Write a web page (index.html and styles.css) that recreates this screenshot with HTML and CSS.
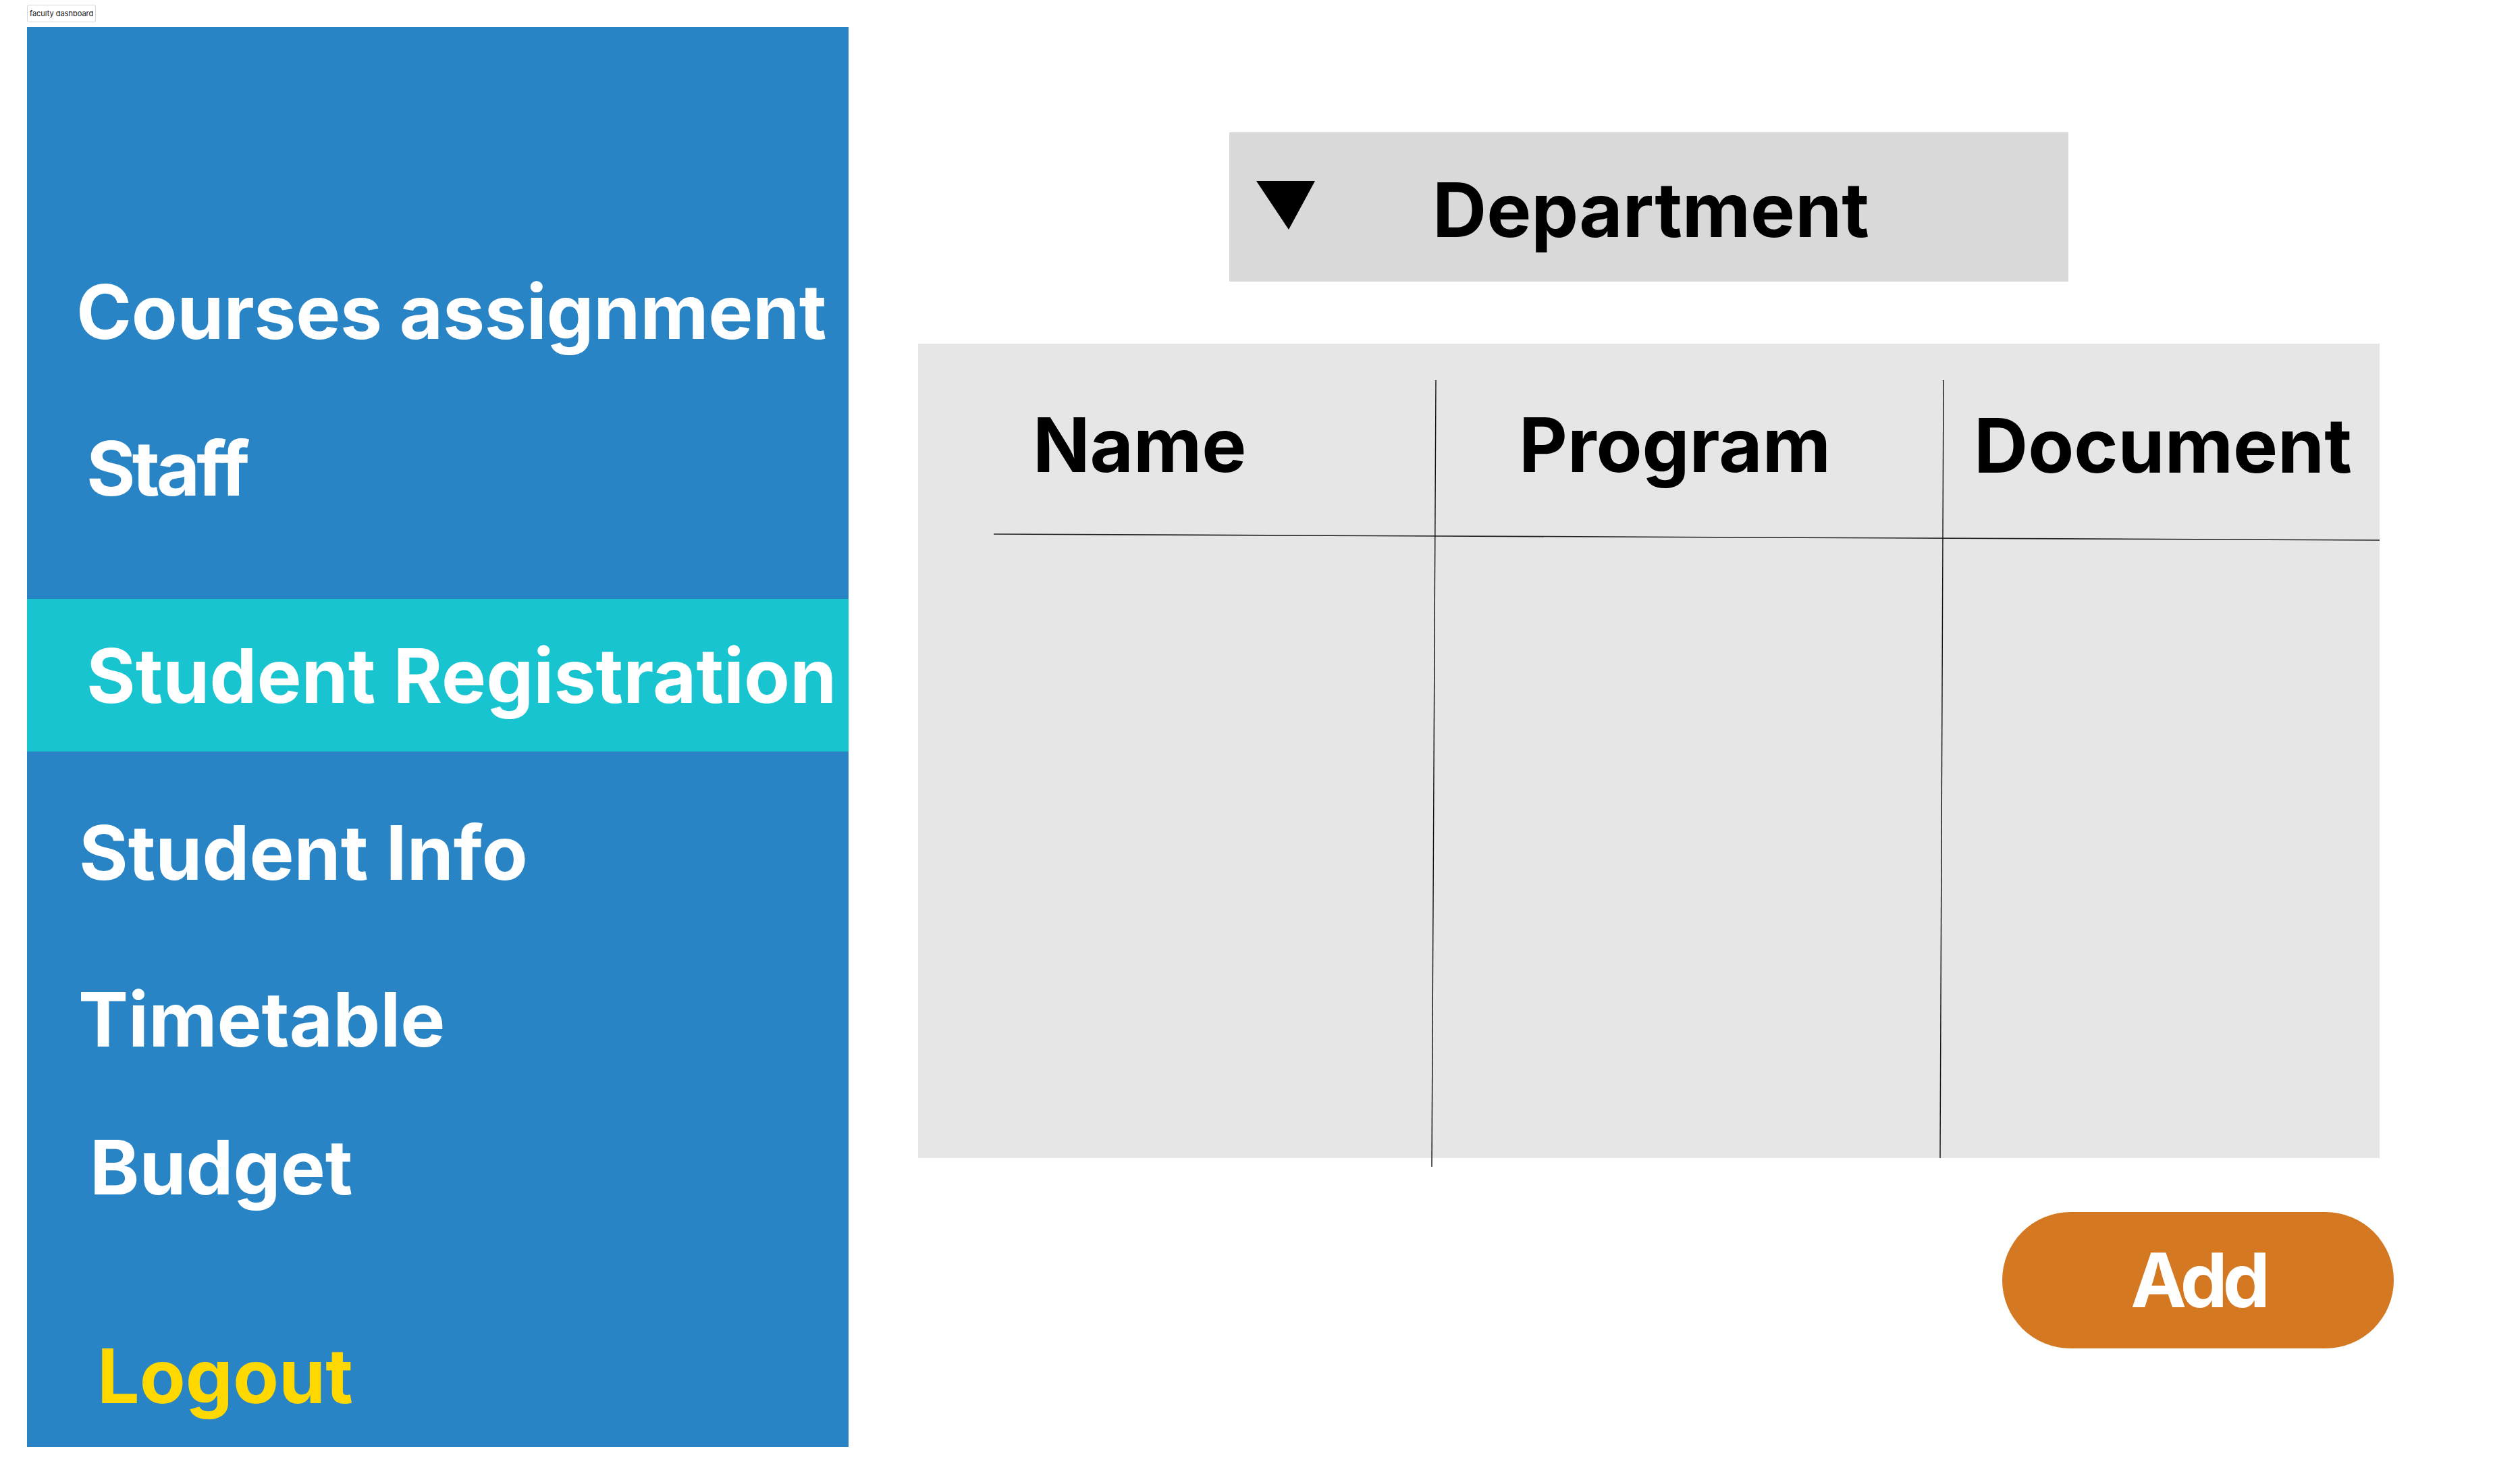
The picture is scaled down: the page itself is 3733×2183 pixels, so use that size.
FILE: index.html
```html
<!DOCTYPE html>
<html lang="en">
<head>
<meta charset="utf-8">
<title>faculty dashboard</title>
<link rel="stylesheet" href="styles.css">
</head>
<body>
<div class="page">
  <div class="frame-label">faculty dashboard</div>
  <div class="frame">
    <nav class="sidebar">
      <div class="nav-item nav-courses">Courses assignment</div>
      <div class="nav-item nav-staff">Staff</div>
      <div class="nav-active"><div class="nav-item nav-reg">Student Registration</div></div>
      <div class="nav-item nav-info">Student Info</div>
      <div class="nav-item nav-time">Timetable</div>
      <div class="nav-item nav-budget">Budget</div>
      <div class="nav-item nav-logout">Logout</div>
    </nav>
    <main class="content">
      <div class="dropdown">
        <svg class="dd-arrow" width="87" height="72" viewBox="0 0 87 72"><polygon points="0,0 87,0 48,72" fill="#000"/></svg>
        <span class="dd-text">Department</span>
      </div>
      <div class="table">
        <div class="th th-name">Name</div>
        <div class="th th-program">Program</div>
        <div class="th th-doc">Document</div>
        <svg class="table-lines" width="2165" height="1220" viewBox="0 0 2165 1220">
          <line x1="112" y1="282" x2="2165" y2="291" stroke="#222" stroke-width="1.6"/>
          <line x1="767" y1="54" x2="761" y2="1219" stroke="#111" stroke-width="1.4"/>
          <line x1="1519" y1="54" x2="1514" y2="1206" stroke="#111" stroke-width="1.4"/>
        </svg>
      </div>
      <div class="actions">
        <button class="add-btn">Add</button>
      </div>
    </main>
  </div>
</div>
</body>
</html>
```

FILE: styles.css
```css
* { box-sizing: border-box; }
html, body { margin: 0; padding: 0; background: #ffffff; }
body { font-family: Inter, "Noto Sans", sans-serif; }

.page { padding: 7px 0 0 40px; }

.frame-label {
  display: inline-block;
  height: 26px;
  padding: 0 3px;
  font-size: 11px;
  line-height: 24px;
  color: #111;
  border: 1px solid #d6d6d6;
  border-radius: 3px;
  background: #fff;
  margin-bottom: 7px;
  vertical-align: top;
}

.frame { display: flex; align-items: flex-start; }

.sidebar {
  width: 1217px;
  height: 2103px;
  background: #2884c5;
  display: flex;
  flex-direction: column;
  flex-shrink: 0;
}

.nav-item {
  font-size: 111px;
  font-weight: 700;
  line-height: 110px;
  height: 110px;
  color: #ffffff;
  white-space: nowrap;
}

.nav-courses { margin-top: 367px; padding-left: 73px; letter-spacing: -0.3px; }
.nav-staff { margin-top: 122px; padding-left: 88px; letter-spacing: -5px; }
.nav-active {
  margin-top: 138px;
  height: 226px;
  background: #18c4cf;
  padding-top: 59px;
}
.nav-reg { padding-left: 88px; }
.nav-info { margin-top: 95px; padding-left: 77px; }
.nav-time { margin-top: 137px; padding-left: 76px; }
.nav-budget { margin-top: 109px; padding-left: 93px; }
.nav-logout { margin-top: 199px; padding-left: 104px; color: #ffd800; }

.content {
  flex: 1;
  display: flex;
  flex-direction: column;
  align-items: flex-start;
}

.dropdown {
  margin-top: 156px;
  margin-left: 564px;
  width: 1243px;
  height: 221px;
  background: #d9d9d9;
  display: flex;
  align-items: flex-start;
  padding: 72px 0 0 40px;
}
.dd-arrow { display: block; flex-shrink: 0; }
.dd-text {
  margin-left: 174px;
  margin-top: -12px;
  font-size: 111px;
  font-weight: 700;
  line-height: 110px;
  color: #000;
  white-space: nowrap;
}

.table {
  position: relative;
  margin-top: 92px;
  margin-left: 103px;
  width: 2165px;
  height: 1206px;
  background: #e6e6e6;
  display: grid;
  grid-template-columns: 764px 753px 648px;
  align-content: start;
  padding-top: 95px;
}
.th {
  font-size: 111px;
  font-weight: 700;
  line-height: 110px;
  color: #000;
  white-space: nowrap;
}
.th-name { padding-left: 170px; }
.th-program { padding-left: 126px; }
.th-doc { padding-left: 47px; margin-top: 1px; }

.table-lines {
  position: absolute;
  left: 0;
  top: 0;
  overflow: visible;
  pointer-events: none;
}

.actions { margin-top: 80px; margin-left: 1709px; }
.add-btn {
  width: 580px;
  height: 202px;
  border: none;
  border-radius: 101px;
  background: #d47822;
  color: #ffffff;
  font-family: Inter, "Noto Sans", sans-serif;
  font-size: 111px;
  font-weight: 700;
  line-height: 110px;
  padding: 0;
  letter-spacing: -7px;
}
```
